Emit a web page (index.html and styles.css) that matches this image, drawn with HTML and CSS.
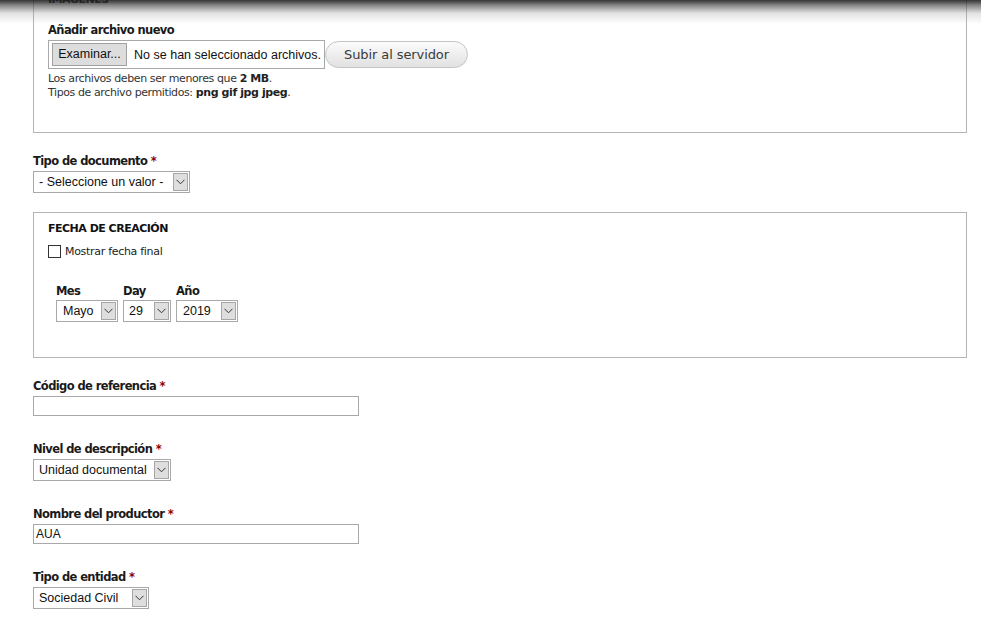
FILE: index.html
```html
<!DOCTYPE html>
<html lang="es">
<head>
    <meta charset="UTF-8">
    <meta name="viewport" content="width=device-width, initial-scale=1.0">
    <title>Nuevo documento</title>
    <link rel="stylesheet" href="styles.css">
</head>
<body>
    <div class="top-shadow"></div>
    <form class="node-form">
        <div class="fieldset fieldset-images">
            <div class="fieldset-title">IMÁGENES</div>
            <div class="form-item">
                <label class="form-label">Añadir archivo nuevo</label>
                <div class="upload-row">
                    <div class="file-input">
                        <span class="file-button">Examinar...</span>
                        <span class="file-name">No se han seleccionado archivos.</span>
                    </div>
                    <button type="button" class="upload-btn">Subir al servidor</button>
                </div>
                <div class="description">
                    Los archivos deben ser menores que <strong>2 MB</strong>.<br>
                    Tipos de archivo permitidos: <strong>png gif jpg jpeg</strong>.
                </div>
            </div>
        </div>

        <div class="form-item before-fieldset">
            <label class="form-label">Tipo de documento <span class="required">*</span></label>
            <div class="select select-doc">
                <span class="select-value">- Seleccione un valor -</span>
                <span class="select-arrow"><svg width="9" height="6" viewBox="0 0 9 6"><path d="M0.5 0.8 L4.5 4.8 L8.5 0.8" fill="none" stroke="#333" stroke-width="1"/></svg></span>
            </div>
        </div>

        <div class="fieldset fieldset-date">
            <div class="fieldset-title">FECHA DE CREACIÓN</div>
            <div class="checkbox-row">
                <span class="checkbox"></span>
                <span class="checkbox-label">Mostrar fecha final</span>
            </div>
            <div class="date-row">
                <div class="date-part">
                    <label class="form-label">Mes</label>
                    <div class="select select-month">
                        <span class="select-value">Mayo</span>
                        <span class="select-arrow"><svg width="9" height="6" viewBox="0 0 9 6"><path d="M0.5 0.8 L4.5 4.8 L8.5 0.8" fill="none" stroke="#333" stroke-width="1"/></svg></span>
                    </div>
                </div>
                <div class="date-part">
                    <label class="form-label">Day</label>
                    <div class="select select-day">
                        <span class="select-value">29</span>
                        <span class="select-arrow"><svg width="9" height="6" viewBox="0 0 9 6"><path d="M0.5 0.8 L4.5 4.8 L8.5 0.8" fill="none" stroke="#333" stroke-width="1"/></svg></span>
                    </div>
                </div>
                <div class="date-part">
                    <label class="form-label">Año</label>
                    <div class="select select-year">
                        <span class="select-value">2019</span>
                        <span class="select-arrow"><svg width="9" height="6" viewBox="0 0 9 6"><path d="M0.5 0.8 L4.5 4.8 L8.5 0.8" fill="none" stroke="#333" stroke-width="1"/></svg></span>
                    </div>
                </div>
            </div>
        </div>

        <div class="form-item">
            <label class="form-label">Código de referencia <span class="required">*</span></label>
            <input type="text" class="text-input" value="">
        </div>

        <div class="form-item">
            <label class="form-label">Nivel de descripción <span class="required">*</span></label>
            <div class="select select-level">
                <span class="select-value">Unidad documental</span>
                <span class="select-arrow"><svg width="9" height="6" viewBox="0 0 9 6"><path d="M0.5 0.8 L4.5 4.8 L8.5 0.8" fill="none" stroke="#333" stroke-width="1"/></svg></span>
            </div>
        </div>

        <div class="form-item">
            <label class="form-label">Nombre del productor <span class="required">*</span></label>
            <input type="text" class="text-input" value="AUA">
        </div>

        <div class="form-item">
            <label class="form-label">Tipo de entidad <span class="required">*</span></label>
            <div class="select select-entity">
                <span class="select-value">Sociedad Civil</span>
                <span class="select-arrow"><svg width="9" height="6" viewBox="0 0 9 6"><path d="M0.5 0.8 L4.5 4.8 L8.5 0.8" fill="none" stroke="#333" stroke-width="1"/></svg></span>
            </div>
        </div>
    </form>
</body>
</html>
```

FILE: styles.css
```css
:root {
    --label-color: #1a1a1a;
    --border-color: #b4b4b4;
    --input-border: #a9a9a9;
    --required: #8b0000;
}
body {
    margin: 0;
    background: #fff;
    color: #333;
    font-family: 'DejaVu Sans', Verdana, sans-serif;
    font-size: 11px;
    overflow: hidden;
}
.top-shadow {
    position: fixed;
    top: 0;
    left: 0;
    right: 0;
    height: 24px;
    background: linear-gradient(to bottom, rgba(30,30,30,0.9) 0%, rgba(70,70,70,0.65) 22%, rgba(170,170,170,0.35) 55%, rgba(255,255,255,0) 100%);
    z-index: 5;
}
.node-form {
    margin: -17px 14px 0 33px;
}
.fieldset {
    border: 1px solid var(--border-color);
    padding: 9px 14px 0 14px;
}
.fieldset-title {
    font-weight: bold;
    font-size: 11px;
    line-height: 14px;
    color: #111;
    letter-spacing: -0.5px;
}
.fieldset-images {
    height: 150px;
    box-sizing: border-box;
    margin-bottom: 21px;
}
.fieldset-images .form-item {
    margin-top: 16px;
}
.fieldset-date {
    height: 146px;
    box-sizing: border-box;
    margin-bottom: 21px;
}
.form-item {
    margin-bottom: 26px;
}
.form-item.before-fieldset {
    margin-bottom: 19px;
}
.form-label {
    display: block;
    font-weight: bold;
    font-size: 11.5px;
    line-height: 15px;
    color: var(--label-color);
    letter-spacing: -0.6px;
    margin-bottom: 2px;
}
.required {
    color: var(--required);
}
.upload-row {
    display: flex;
    align-items: flex-start;
}
.file-input {
    display: flex;
    align-items: center;
    width: 277px;
    height: 29px;
    box-sizing: border-box;
    border: 1px solid var(--input-border);
    padding: 0 3px;
    font-family: 'Liberation Sans', Arial, sans-serif;
    font-size: 12.5px;
    color: #111;
    white-space: nowrap;
}
.file-button {
    background: #dddddd;
    border: 1px solid #a0a0a0;
    height: 23px;
    width: 77px;
    text-align: center;
    box-sizing: border-box;
    line-height: 21px;
    margin-right: 7px;
}
.upload-btn {
    width: 143px;
    height: 27px;
    margin: 1px 0 0 0;
    border: 1px solid #c4c4c4;
    border-radius: 14px;
    background: linear-gradient(to bottom, #fbfbfb, #e1e1e1);
    font-family: 'DejaVu Sans', Verdana, sans-serif;
    font-size: 13px;
    color: #3a3a3a;
    letter-spacing: -0.1px;
    padding: 0;
}
.description {
    margin-top: 3px;
    line-height: 14px;
    color: #333;
    letter-spacing: -0.4px;
}
.description strong {
    color: #222;
}
.select {
    display: flex;
    height: 22px;
    box-sizing: border-box;
    border: 1px solid var(--input-border);
    background: #fff;
    font-family: 'Liberation Sans', Arial, sans-serif;
    font-size: 12.5px;
    color: #111;
}
.select-value {
    flex: 1;
    padding-left: 5px;
    line-height: 20px;
    white-space: nowrap;
}
.select-arrow {
    width: 15px;
    margin: 1px;
    box-sizing: border-box;
    border: 1px solid #a6a6a6;
    background: #dedede;
    display: flex;
    align-items: center;
    justify-content: center;
}
.select-doc { width: 157px; }
.select-level { width: 138px; }
.select-entity { width: 116px; }
.select-month { width: 62px; }
.select-day { width: 48px; }
.select-year { width: 62px; }
.select-month .select-value,
.select-year .select-value { padding-left: 6px; }
.checkbox-row {
    display: flex;
    align-items: center;
    margin-top: 9px;
}
.checkbox {
    width: 13px;
    height: 13px;
    box-sizing: border-box;
    border: 1px solid #333;
    margin-right: 4px;
}
.checkbox-label {
    color: #222;
    letter-spacing: -0.3px;
}
.date-row {
    display: flex;
    gap: 5px;
    margin-top: 26px;
    margin-left: 8px;
}
.date-part .form-label {
    margin-bottom: 1px;
}
.text-input {
    display: block;
    width: 326px;
    height: 20px;
    box-sizing: border-box;
    margin: 0;
    border: 1px solid var(--input-border);
    padding: 0 2px;
    font-family: 'Liberation Sans', Arial, sans-serif;
    font-size: 12px;
    color: #111;
    outline: none;
}
```
